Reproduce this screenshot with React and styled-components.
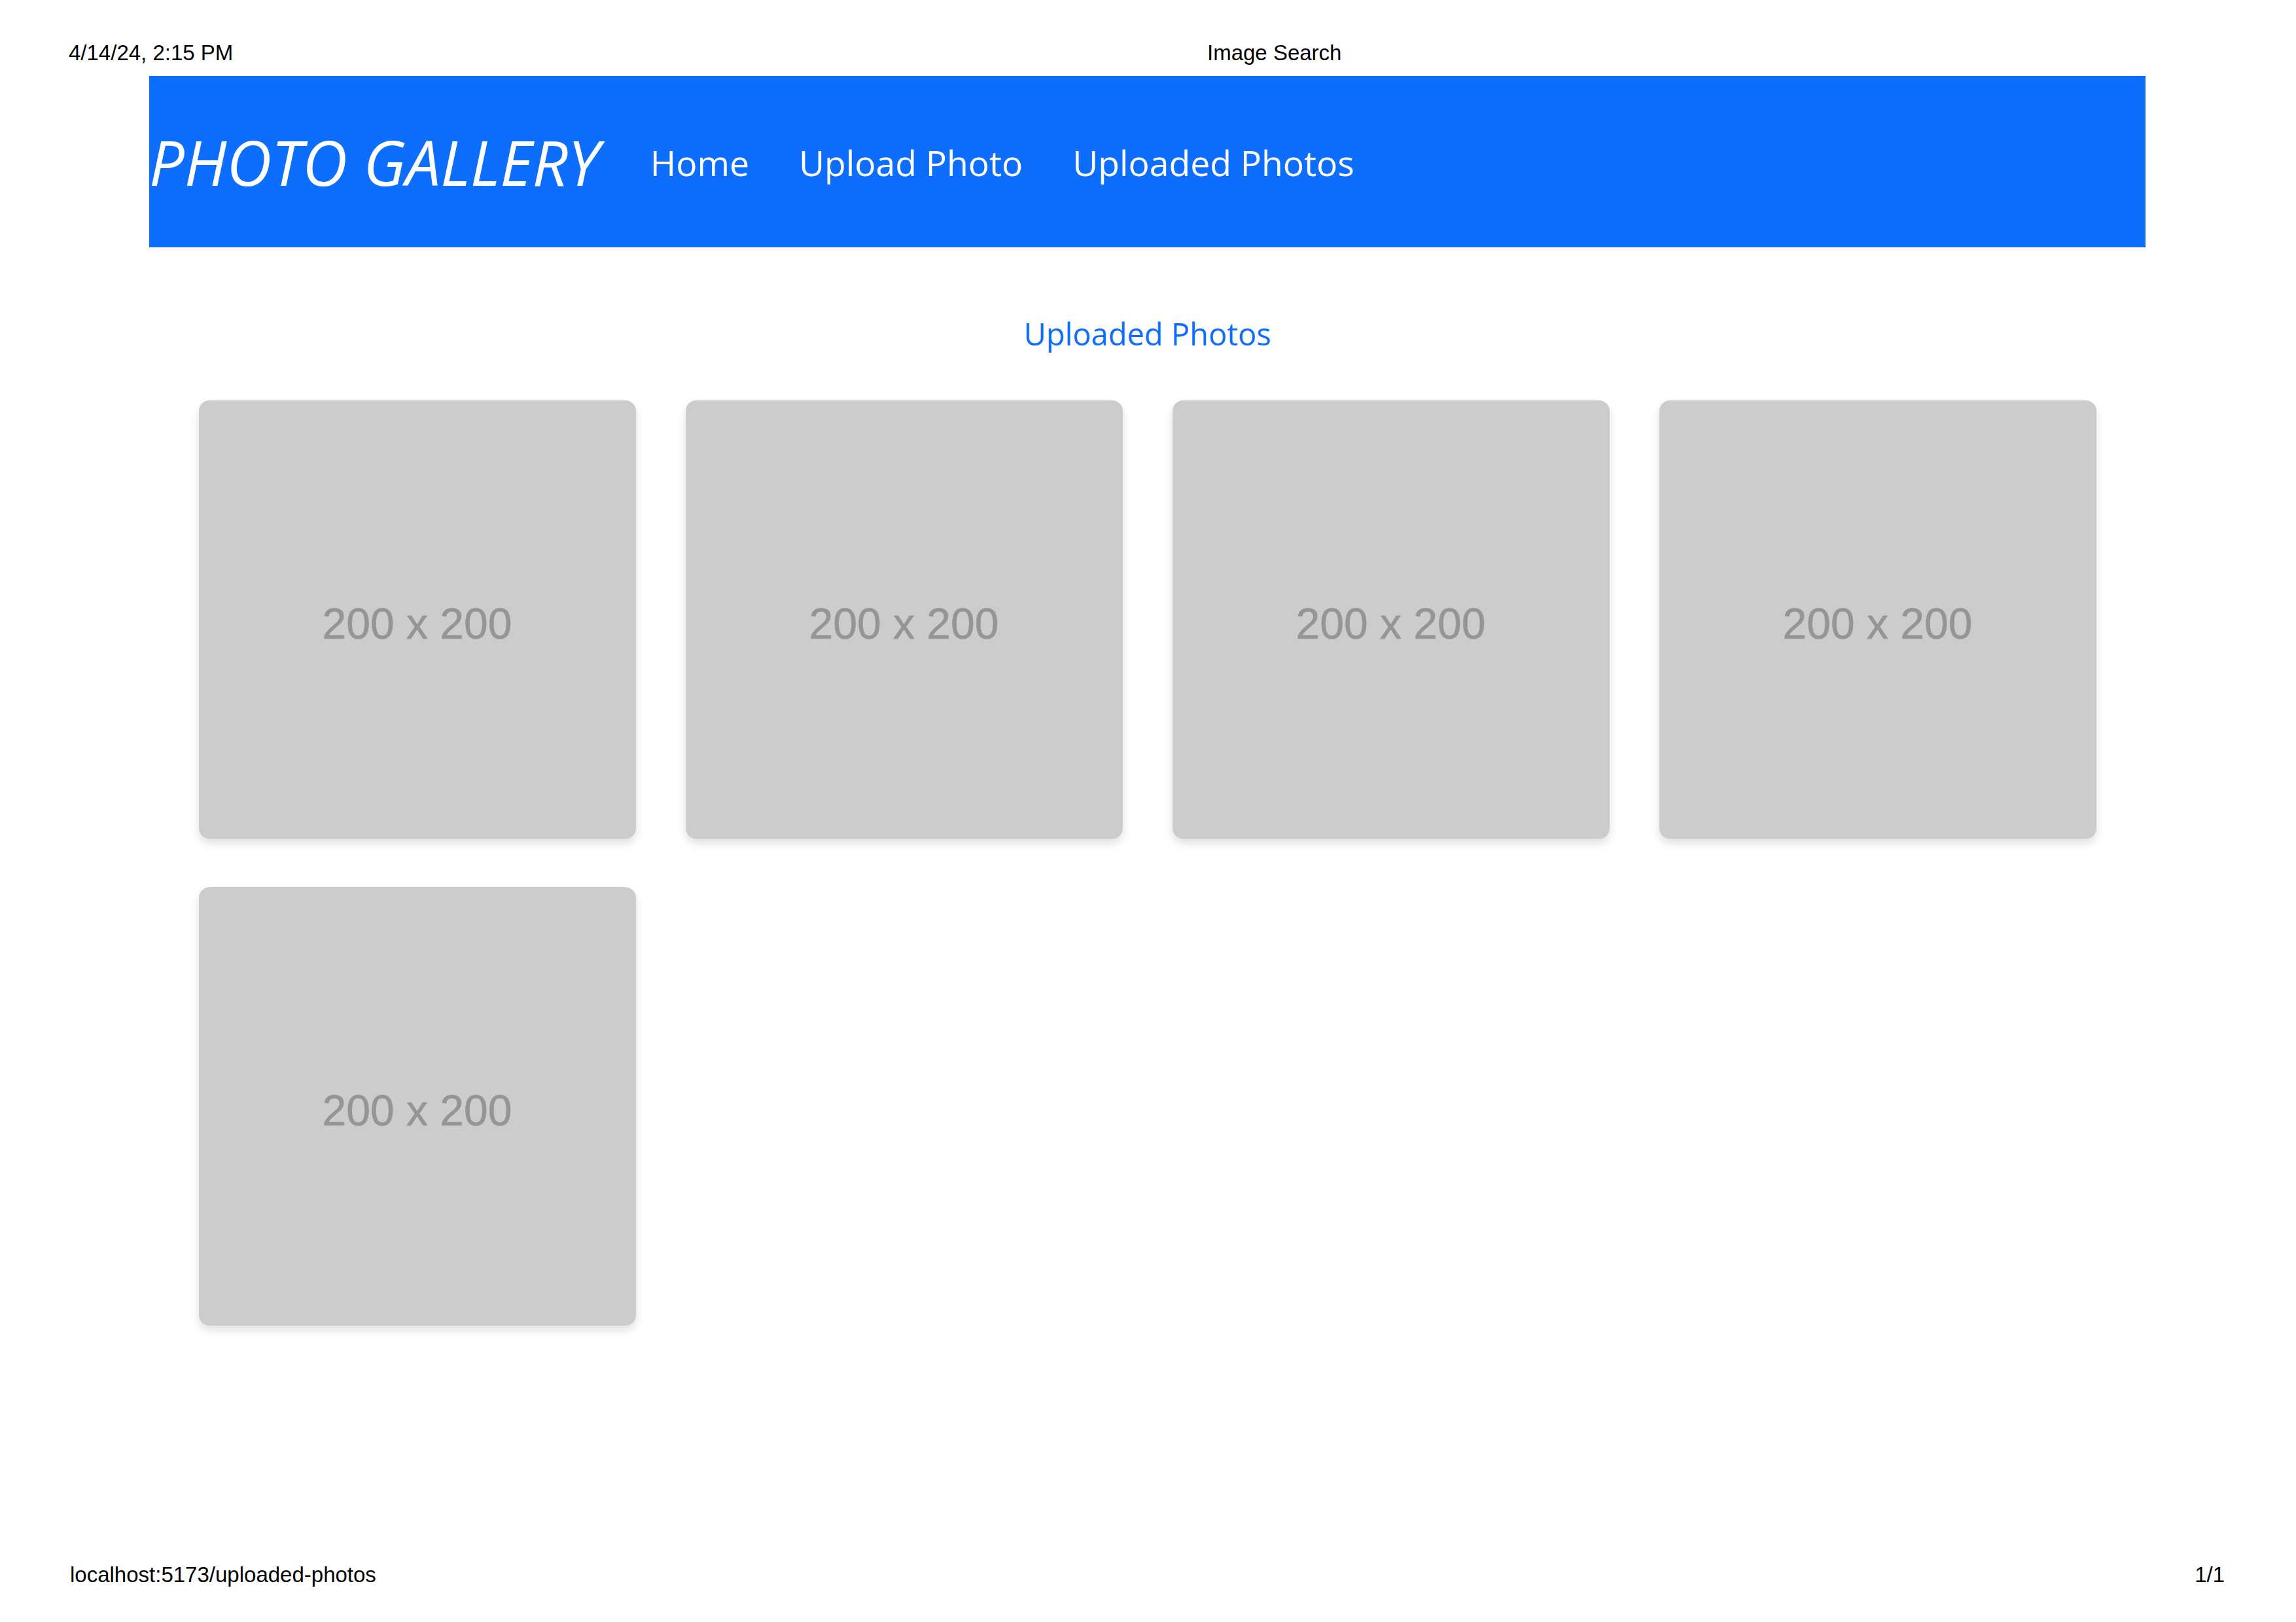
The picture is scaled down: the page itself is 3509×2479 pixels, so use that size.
import React from "react";
import styled, { createGlobalStyle } from "styled-components";

const GlobalStyle = createGlobalStyle`
  html, body {
    margin: 0;
    padding: 0;
    background: #fff;
  }
  * {
    box-sizing: border-box;
  }
`;

const photos = [1, 2, 3, 4, 5];

const App = () => {
  return (
    <Page>
      <GlobalStyle />
      <PrintBar>
        <PrintText>4/14/24, 2:15 PM</PrintText>
        <PrintText>Image Search</PrintText>
      </PrintBar>
      <Main>
        <NavBar>
          <Brand>PHOTO GALLERY</Brand>
          <NavLinks>
            <NavLink>Home</NavLink>
            <NavLink>Upload Photo</NavLink>
            <NavLink>Uploaded Photos</NavLink>
          </NavLinks>
        </NavBar>
        <Title>Uploaded Photos</Title>
        <Grid>
          {photos.map((id) => (
            <PhotoCard key={id}>
              <Placeholder>200 x 200</Placeholder>
            </PhotoCard>
          ))}
        </Grid>
      </Main>
      <PrintFooter>
        <PrintText>localhost:5173/uploaded-photos</PrintText>
        <PrintText>1/1</PrintText>
      </PrintFooter>
    </Page>
  );
};

export default App;

const Page = styled.div`
  height: 100vh;
  display: flex;
  flex-direction: column;
`;

const PrintBar = styled.div`
  height: 116px;
  padding: 64px 0 0 105px;
  display: grid;
  grid-template-columns: 1740px auto;
`;

const PrintText = styled.span`
  font-family: "Liberation Sans", Arial, sans-serif;
  font-size: 33px;
  line-height: 33px;
  color: #000;
`;

const Main = styled.main`
  flex: 1;
  padding: 0 230px 0 228px;
`;

const NavBar = styled.nav`
  height: 262px;
  background: #0d6efd;
  display: flex;
  align-items: center;
`;

const Brand = styled.a`
  font-family: "Open Sans", "Noto Sans", sans-serif;
  font-style: italic;
  font-size: 95px;
  color: #fff;
  margin-right: 40px;
  white-space: nowrap;
`;

const NavLinks = styled.div`
  display: flex;
  align-items: center;
  padding-top: 3px;
`;

const NavLink = styled.a`
  font-family: "Open Sans", "Noto Sans", sans-serif;
  font-size: 53.5px;
  color: #fff;
  padding: 0 38px;
  white-space: nowrap;
`;

const Title = styled.h2`
  margin: 104px 0 74px;
  font-family: "Open Sans", "Noto Sans", sans-serif;
  font-weight: 400;
  font-size: 47px;
  line-height: 1.2;
  color: #0d6efd;
  text-align: center;
`;

const Grid = styled.div`
  display: grid;
  grid-template-columns: repeat(4, 668px);
  column-gap: 76px;
  row-gap: 74px;
  justify-content: center;
`;

const PhotoCard = styled.div`
  width: 668px;
  height: 670px;
  background: #cccccc;
  border-radius: 16px;
  box-shadow: 0 7px 14px rgba(0, 0, 0, 0.12);
  display: flex;
  align-items: center;
  justify-content: center;
`;

const Placeholder = styled.span`
  font-family: "Liberation Sans", Arial, sans-serif;
  font-size: 66px;
  color: #959595;
  margin-top: 12px;
  -webkit-text-stroke: 0.6px #959595;
`;

const PrintFooter = styled.div`
  height: 89px;
  padding: 0 109px 0 107px;
  display: flex;
  justify-content: space-between;
  align-items: flex-start;
`;
